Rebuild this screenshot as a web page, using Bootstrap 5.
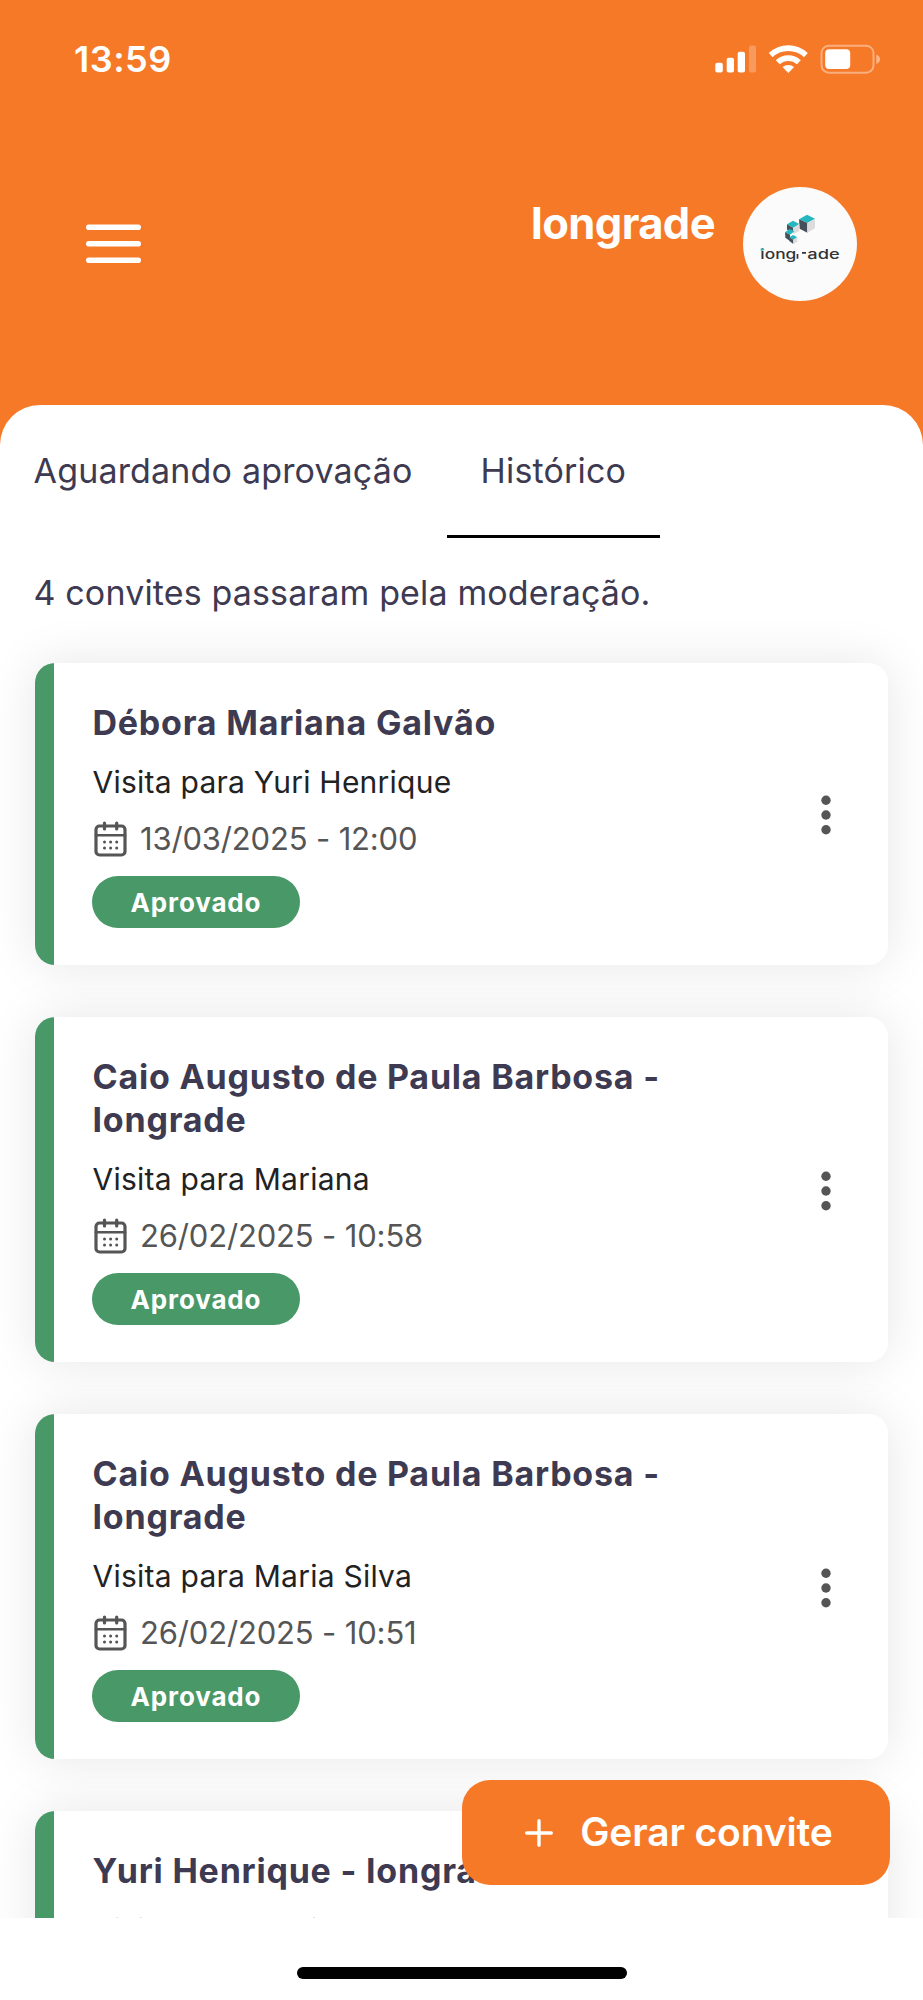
<!DOCTYPE html>
<html lang="pt-BR">
<head>
<meta charset="utf-8">
<meta name="viewport" content="width=device-width, initial-scale=1">
<title>Convites</title>
<link href="https://cdn.jsdelivr.net/npm/bootstrap@5.3.0/dist/css/bootstrap.min.css" rel="stylesheet">
<style>
:root{--brand:#f67928;--ink:#3d3a51;--ok:#499868}
body{font-family:Inter,"Liberation Sans",sans-serif;background:#fff;color:var(--ink)}
.screen{width:923px;height:2000px;background:var(--brand)}
.statusbar{height:116px;padding:34px 42px 0 74px}
.clock{font-size:36px;font-weight:600;line-height:50px;letter-spacing:.5px}
.signals{width:166px;height:30px;margin-top:9.5px}
.topbar{height:289px;padding:71px 66px 0 86px}
.burger{width:55px;height:40px;margin-top:37px}
.org{font-size:43.5px;font-weight:700;line-height:52px;margin-top:10px;margin-right:28px;letter-spacing:-.6px}
.avatar{width:114px;height:114px}
.sheet{border-radius:40px 40px 0 0;min-height:0}
.tabs .nav-link{color:var(--ink);font-size:34px;line-height:42px;padding:45px 34px 43px;border-bottom:3px solid transparent;border-radius:0;letter-spacing:.17px}
.tabs .nav-link:first-child{padding-left:33.5px}
.tabs .nav-link.active{border-color:#000}
.summary{font-size:34px;line-height:42px;margin:34px 0 49px 33.5px;letter-spacing:.14px}
.invites{padding:0 35px;gap:52px}
.invite{border:0;border-radius:20px;box-shadow:0 0 50px rgba(0,0,0,.1);padding:39px 57px 37px 57px;background:linear-gradient(90deg,var(--ok) 19.5px,#fff 19.5px);color:var(--ink)}
.invite h2{font-size:34px;font-weight:700;line-height:42px;margin:0 0 17px .5px;max-width:620px;letter-spacing:.78px}
.invite h2.two-line{line-height:42.5px}
.visit{font-size:30px;line-height:42px;color:#222;margin:0 0 14.5px .5px;letter-spacing:.24px}
.when{font-size:31px;line-height:42px;color:#555;margin:0 0 16.5px;letter-spacing:-.16px}
.cal{width:33px;height:36px;margin:0 13px 0 2px}
.pill{width:208px;height:52px;border-radius:26px;background:var(--ok);color:#fff;font-size:26px;font-weight:700;letter-spacing:.85px}
.dots{width:10px;height:40px}
.fab{right:33px;bottom:33px;width:428px;height:105px;border-radius:28px;background:var(--brand);color:#fff;font-size:39px;font-weight:600;letter-spacing:-.15px}
.plus{width:28px;height:28px;margin:0 27px 0 6px}
.homearea{height:82px;padding-top:49px}
.homebar{width:330px;height:12px;border-radius:6px;background:#000}
</style>
</head>
<body>
<div class="screen d-flex flex-column overflow-hidden">
  <div class="statusbar d-flex justify-content-between align-items-start text-white flex-shrink-0">
    <div class="clock">13:59</div>
    <svg class="signals" viewBox="715 43.500 166 30" fill="#fff">
      <rect x="715.300" y="62.300" width="7.500" height="9.700" rx="2"/><rect x="726.700" y="57.300" width="7.300" height="14.700" rx="2"/><rect x="737.700" y="51.300" width="7.300" height="20.700" rx="2"/><rect x="749" y="45" width="7" height="27" rx="2" opacity=".25"/>
      <path d="M768.800 52.600A28 28 0 0 1 807.800 52.600L804 56.800A22.500 22.500 0 0 0 772.600 56.800Z"/>
      <path d="M775.800 59.800A18.200 18.200 0 0 1 800.800 59.800L796.900 63.800A12.700 12.700 0 0 0 779.700 63.800Z"/>
      <path d="M782.500 66.600A9 9 0 0 1 794.100 66.600L788.300 72.400Z"/>
      <rect x="821.500" y="45.200" width="52" height="27" rx="7.500" fill="none" stroke="#fff" stroke-width="2" opacity=".4"/>
      <rect x="825.200" y="48.800" width="25" height="19.600" rx="4"/>
      <path d="M876.300 54v9.500q3.700-1.600 3.700-4.750T876.300 54" opacity=".45"/>
    </svg>
  </div>
  <header class="topbar d-flex justify-content-between align-items-start text-white flex-shrink-0">
    <svg class="burger" viewBox="0 0 55 40" stroke="#fff" stroke-width="5.600" stroke-linecap="round"><path d="M2.800 3.200H52.200M2.800 19.700H52.200M2.800 36.300H52.200"/></svg>
    <div class="d-flex align-items-start">
      <div class="org">Iongrade</div>
      <svg class="avatar" viewBox="39 36 342 342">
        <circle cx="210" cy="207" r="171" fill="#fbfbfb"/>
        <path d="M207 133 231 119 255 131 232 144Z" fill="#24b7c0"/><path d="M207 133 232 144V173L209 161Z" fill="#46505a"/><path d="M232 144 255 131V160L232 173Z" fill="#dcdcde"/>
        <path d="M171 148 189 137 208 147 189 159Z" fill="#24b7c0"/><path d="M171 148 189 159V172L171 164Z" fill="#46505a"/><path d="M189 159 208 147V168L189 178Z" fill="#dcdcde"/>
        <path d="M165 172 179 162 193 169 180 179Z" fill="#24b7c0"/><path d="M165 172 180 179V198L166 188Z" fill="#46505a"/>
        <path d="M178 187 189 180 202 187 190 194Z" fill="#24b7c0"/><path d="M178 187 190 194V207L178 198Z" fill="#46505a"/><path d="M190 194 202 187V200L190 207Z" fill="#dcdcde"/>
        <g font-family="Inter,sans-serif" font-size="40" font-weight="500" fill="#333" letter-spacing="0"><text x="91" y="252" textLength="108" lengthAdjust="spacingAndGlyphs">iong</text><text x="232" y="252" textLength="97" lengthAdjust="spacingAndGlyphs">ade</text></g>
        <path d="M200 237h5v14h-5zM216 231h12v5h-12z" fill="#333"/><path d="M92 221h8v6h-8z" fill="#24b7c0"/>
      </svg>
    </div>
  </header>
  <main class="sheet bg-white flex-grow-1 d-flex flex-column overflow-hidden position-relative">
    <nav class="nav tabs flex-shrink-0">
      <a class="nav-link" href="#">Aguardando aprovação</a>
      <a class="nav-link active" href="#">Histórico</a>
    </nav>
    <p class="summary flex-shrink-0">4 convites passaram pela moderação.</p>
    <section class="invites d-flex flex-column" id="list"></section>
    <button class="btn fab border-0 position-absolute d-flex align-items-center justify-content-center p-0" type="button">
      <svg class="plus" viewBox="0 0 28 28" stroke="#fff" stroke-width="3.400" stroke-linecap="round"><path d="M14 1.700V26.300M1.700 14H26.300"/></svg>Gerar convite
    </button>
  </main>
  <footer class="homearea bg-white flex-shrink-0 d-flex justify-content-center"><div class="homebar"></div></footer>
</div>
<script src="https://cdn.jsdelivr.net/npm/bootstrap@5.3.0/dist/js/bootstrap.bundle.min.js"></script>
<script>
const invites = [
  ["Débora Mariana Galvão", "Yuri Henrique", "13/03/2025 - 12:00"],
  ["Caio Augusto de Paula Barbosa - Iongrade", "Mariana", "26/02/2025 - 10:58"],
  ["Caio Augusto de Paula Barbosa - Iongrade", "Maria Silva", "26/02/2025 - 10:51"],
  ["Yuri Henrique - Iongrade", "Mariana", null]
];
const details = when => when === null ? "" : `
      <p class="when d-flex align-items-center">
        <svg class="cal" viewBox="0 0 33 36" fill="none" stroke="#555" stroke-width="3.200" stroke-linecap="round"><rect x="2" y="5" width="29" height="29" rx="3.500"/><path d="M2 14.200H31" stroke-width="2.600"/><path d="M10.500 2V8M22.700 2V8"/><path d="M10.500 21h.01M16.600 21h.01M22.700 21h.01M10.500 27h.01M16.600 27h.01M22.700 27h.01" stroke-width="3"/></svg>
        ${when}</p>
      <div class="pill d-flex align-items-center justify-content-center">Aprovado</div>`;
const menu = `<svg class="dots" viewBox="0 0 10 40" fill="#555"><circle cx="5" cy="5.200" r="4.700"/><circle cx="5" cy="20" r="4.700"/><circle cx="5" cy="34.800" r="4.700"/></svg>`;
document.getElementById("list").innerHTML = invites.map(([name, host, when]) => `
  <article class="invite card flex-row align-items-center justify-content-between flex-shrink-0">
    <div>
      <h2${name.length > 30 ? ' class="two-line"' : ""}>${name}</h2>
      <p class="visit">Visita para ${host}</p>${details(when)}
    </div>
    ${when === null ? "" : menu}
  </article>`).join("");
</script>
</body>
</html>
